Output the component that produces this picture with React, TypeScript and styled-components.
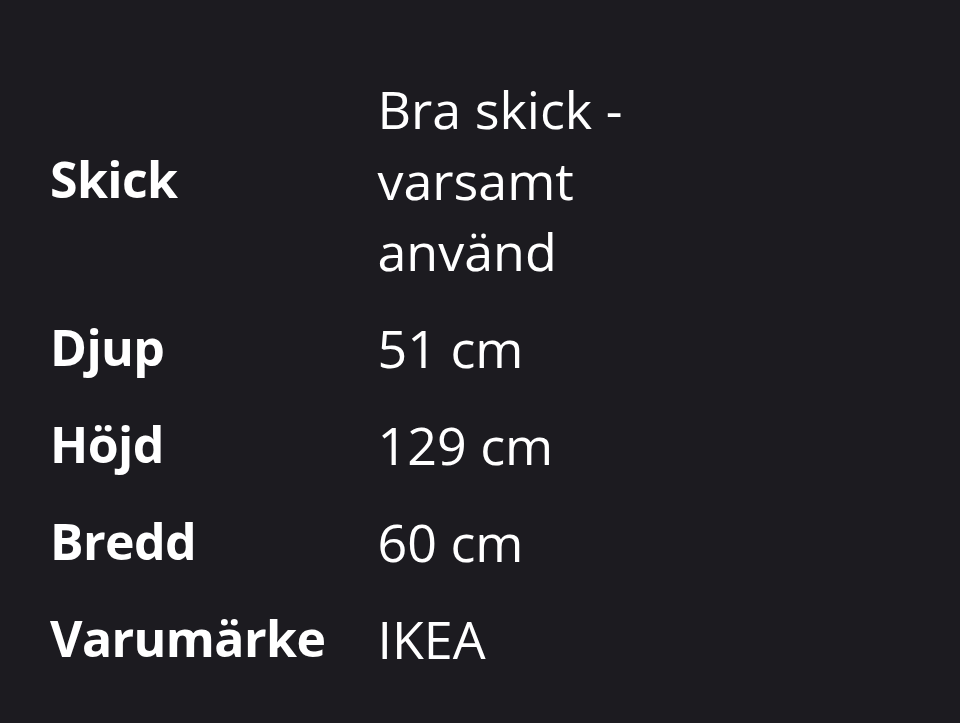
import React from 'react'
import styled, { createGlobalStyle } from 'styled-components'

const GlobalStyle = createGlobalStyle`
  html, body {
    margin: 0;
    padding: 0;
    background: #1c1b20;
  }
  body {
    font-family: 'Open Sans', 'Noto Sans', sans-serif;
    color: #ffffff;
  }
`

const Page = styled.div`
  min-height: 723px;
  padding: 60px 50px 0;
  box-sizing: border-box;
`

const Specs = styled.dl`
  display: grid;
  grid-template-columns: max-content 290px;
  justify-content: start;
  column-gap: 52px;
  margin: 0;
`

const Label = styled.dt`
  display: flex;
  align-items: center;
  font-size: 50px;
  font-weight: 700;
  line-height: 71px;
  padding: 13px 0;
  letter-spacing: -0.6px;
`

const Value = styled.dd`
  margin: 0;
  font-size: 52px;
  font-weight: 400;
  line-height: 71px;
  padding: 13px 0;
`

const specs: [string, string][] = [
  ['Skick', 'Bra skick - varsamt använd'],
  ['Djup', '51 cm'],
  ['Höjd', '129 cm'],
  ['Bredd', '60 cm'],
  ['Varumärke', 'IKEA'],
]

export default function App() {
  return (
    <Page>
      <GlobalStyle />
      <Specs>
        {specs.map(([label, value]) => (
          <React.Fragment key={label}>
            <Label>{label}</Label>
            <Value>{value}</Value>
          </React.Fragment>
        ))}
      </Specs>
    </Page>
  )
}
